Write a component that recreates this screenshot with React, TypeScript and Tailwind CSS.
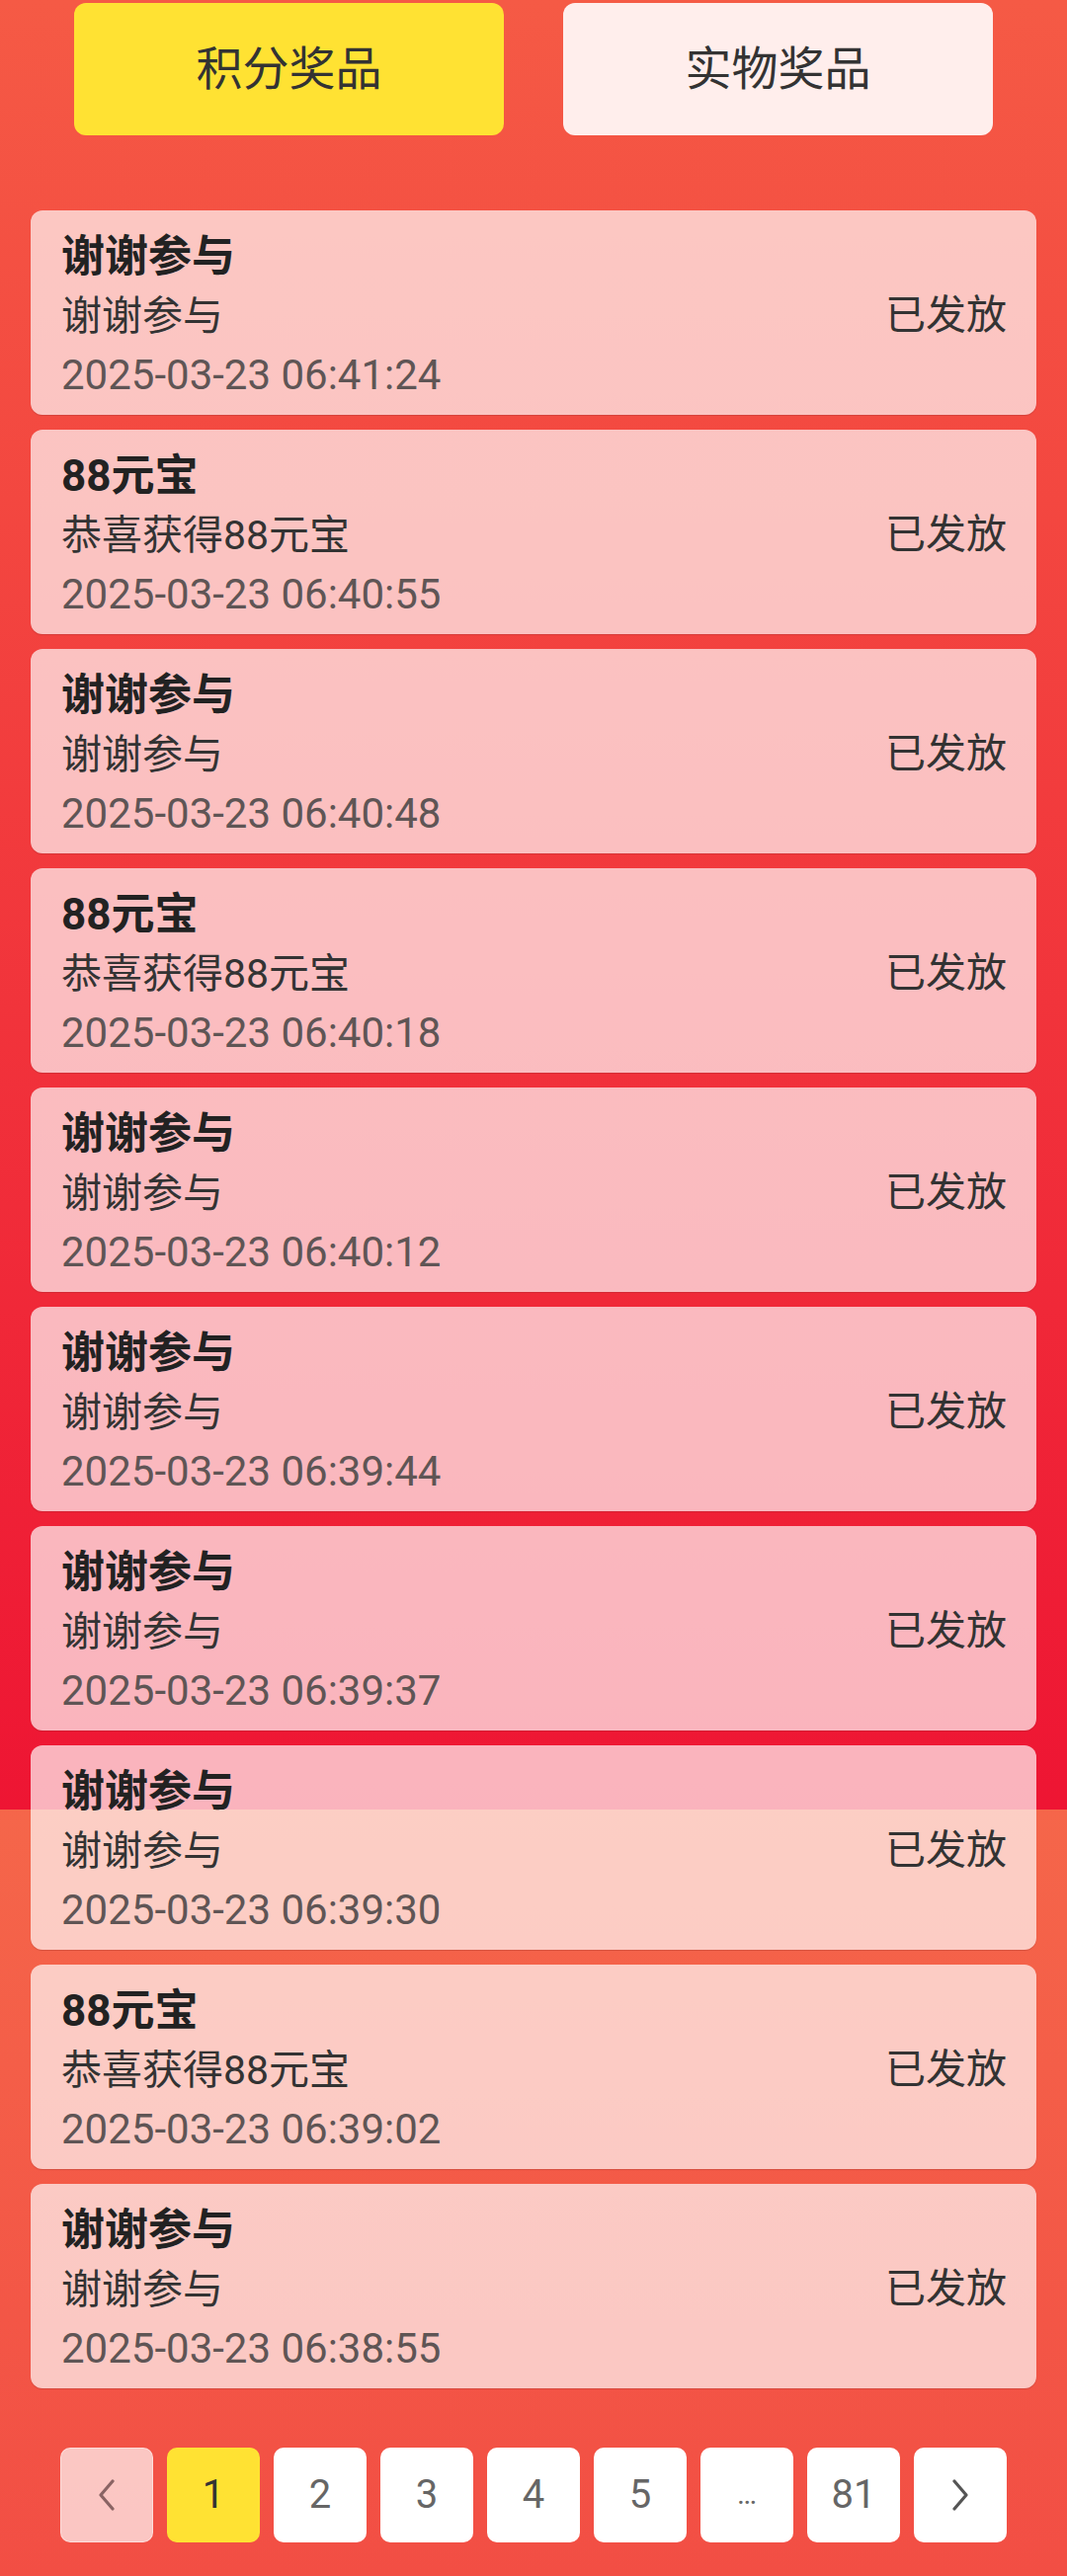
import React from 'react';

type Record = {
  title: string;
  desc: string;
  time: string;
};

const records: Record[] = [
  { title: '谢谢参与', desc: '谢谢参与', time: '2025-03-23 06:41:24' },
  { title: '88元宝', desc: '恭喜获得88元宝', time: '2025-03-23 06:40:55' },
  { title: '谢谢参与', desc: '谢谢参与', time: '2025-03-23 06:40:48' },
  { title: '88元宝', desc: '恭喜获得88元宝', time: '2025-03-23 06:40:18' },
  { title: '谢谢参与', desc: '谢谢参与', time: '2025-03-23 06:40:12' },
  { title: '谢谢参与', desc: '谢谢参与', time: '2025-03-23 06:39:44' },
  { title: '谢谢参与', desc: '谢谢参与', time: '2025-03-23 06:39:37' },
  { title: '谢谢参与', desc: '谢谢参与', time: '2025-03-23 06:39:30' },
  { title: '88元宝', desc: '恭喜获得88元宝', time: '2025-03-23 06:39:02' },
  { title: '谢谢参与', desc: '谢谢参与', time: '2025-03-23 06:38:55' },
];

const pages = ['1', '2', '3', '4', '5', '...', '81'];

function Chevron({ dir }: { dir: 'left' | 'right' }) {
  return (
    <svg width="20" height="34" viewBox="0 0 20 34" fill="none" stroke="currentColor" strokeWidth={3.2} strokeLinecap="round" strokeLinejoin="round">
      {dir === 'left' ? <path d="M16 3 L4 17 L16 31" /> : <path d="M4 3 L16 17 L4 31" />}
    </svg>
  );
}

export default function App() {
  return (
    <div className="min-h-[2608px] w-[1080px] bg-[linear-gradient(180deg,#f55a45_0px,#ee1533_1832px,#f5664a_1832px,#f24e44_2608px)] font-['Roboto','Noto_Sans_CJK_SC',sans-serif] pt-[3px]">
      {/* Tabs */}
      <div className="flex justify-center gap-[60px]">
        <button className="w-[435px] h-[134px] rounded-[12px] bg-[#ffe233] text-[47px] text-[#333] flex items-center justify-center">
          积分奖品
        </button>
        <button className="w-[435px] h-[134px] rounded-[12px] bg-[#ffeeec] text-[47px] text-[#333] flex items-center justify-center">
          实物奖品
        </button>
      </div>

      {/* Records */}
      <div className="mt-[76px] px-[31px] flex flex-col gap-[15px]">
        {records.map((r, i) => (
          <div
            key={i}
            className="h-[207px] rounded-[12px] bg-white/[0.68] shadow-[0_1px_1px_rgba(120,40,40,0.25)] pl-[31px] pr-[30px] pt-[17px] pb-[10px] flex items-center justify-between"
          >
            <div className="flex flex-col">
              <div className="text-[44px] leading-[60px] font-bold text-[#222]">{r.title}</div>
              <div className="text-[41px] leading-[60px] text-[#333]">{r.desc}</div>
              <div className="text-[42px] leading-[60px] text-[#5f5555]">{r.time}</div>
            </div>
            <div className="text-[41px] text-[#333]">已发放</div>
          </div>
        ))}
      </div>

      {/* Pagination */}
      <div className="mt-[60px] flex justify-center gap-[14px]">
        <button className="w-[94px] h-[96px] rounded-[10px] bg-white/[0.68] border border-white/40 text-[#8a6464] flex items-center justify-center">
          <Chevron dir="left" />
        </button>
        {pages.map((p) => (
          <button
            key={p}
            className={
              p === '1'
                ? 'w-[94px] h-[96px] rounded-[10px] bg-[#ffe233] text-[40px] text-[#333] flex items-center justify-center'
                : 'w-[94px] h-[96px] rounded-[10px] bg-white text-[40px] text-[#666] flex items-center justify-center'
            }
          >
            {p === '...' ? <span className="text-[30px] -mt-[4px]">…</span> : p}
          </button>
        ))}
        <button className="w-[94px] h-[96px] rounded-[10px] bg-white text-[#555] flex items-center justify-center">
          <Chevron dir="right" />
        </button>
      </div>
    </div>
  );
}
